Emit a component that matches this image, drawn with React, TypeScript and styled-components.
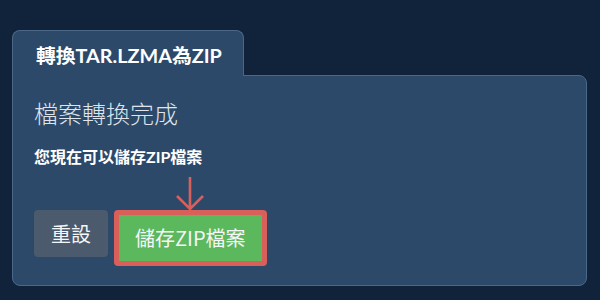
import React from "react";
import styled, { createGlobalStyle } from "styled-components";

const Global = createGlobalStyle`
  html, body { margin: 0; padding: 0; background: #10233a; }
  body { font-family: "Lato", "Noto Sans CJK TC", sans-serif; }
`;

const Page = styled.div`
  width: 600px;
  height: 300px;
  box-sizing: border-box;
  padding: 30px 0 0 12px;
  background: #10233a;
`;

const Tab = styled.div`
  position: relative;
  z-index: 1;
  width: 232px;
  height: 46px;
  box-sizing: border-box;
  margin-bottom: -1px;
  padding: 12px 0 0 23px;
  background: #2c496a;
  border: 1px solid #4c6888;
  border-bottom: none;
  border-radius: 8px 8px 0 0;
  color: #ffffff;
  font-size: 19.8px;
  font-weight: 700;
  line-height: 24px;
`;

const Panel = styled.div`
  width: 575px;
  height: 211px;
  box-sizing: border-box;
  padding: 21px 21px 0;
  background: #2c496a;
  border: 1px solid #4c6888;
  border-radius: 0 8px 8px 8px;
`;

const Heading = styled.div`
  color: #dfe5ec;
  font-family: "Noto Sans CJK TC", sans-serif;
  font-size: 24px;
  font-weight: 300;
  line-height: 32px;
`;

const Note = styled.div`
  margin-top: 18px;
  color: #ffffff;
  font-size: 16px;
  font-weight: 700;
  line-height: 20px;
`;

const Row = styled.div`
  display: flex;
  align-items: flex-start;
  gap: 6px;
  margin-top: 43px;
`;

const Button = styled.button<{ $variant: "reset" | "save" }>`
  position: relative;
  box-sizing: border-box;
  height: ${(p) => (p.$variant === "save" ? "56px" : "47px")};
  padding: 0 ${(p) => (p.$variant === "save" ? "16px" : "17px")};
  border: ${(p) => (p.$variant === "save" ? "5px solid #d9605a" : "none")};
  border-radius: 4px;
  background: ${(p) => (p.$variant === "save" ? "#5cb85c" : "#4b5b6d")};
  color: #f4f6f8;
  font-family: "Noto Sans CJK TC", sans-serif;
  font-size: 20px;
  font-weight: 400;
  line-height: 24px;
  cursor: pointer;
`;

const Arrow = styled.svg`
  position: absolute;
  left: 50%;
  top: -39px;
  width: 30px;
  height: 36px;
  margin-left: -15px;
  pointer-events: none;
`;

export default function App() {
  return (
    <>
      <Global />
      <Page>
        <Tab>轉換TAR.LZMA為ZIP</Tab>
        <Panel>
          <Heading>檔案轉換完成</Heading>
          <Note>您現在可以儲存ZIP檔案</Note>
          <Row>
            <Button $variant="reset">重設</Button>
            <Button $variant="save">
              <Arrow viewBox="0 0 30 36">
                <path
                  d="M15 1 V33 M2 20 L15 33 L28 20"
                  fill="none"
                  stroke="#d9605a"
                  strokeWidth="2.6"
                />
              </Arrow>
              儲存ZIP檔案
            </Button>
          </Row>
        </Panel>
      </Page>
    </>
  );
}
